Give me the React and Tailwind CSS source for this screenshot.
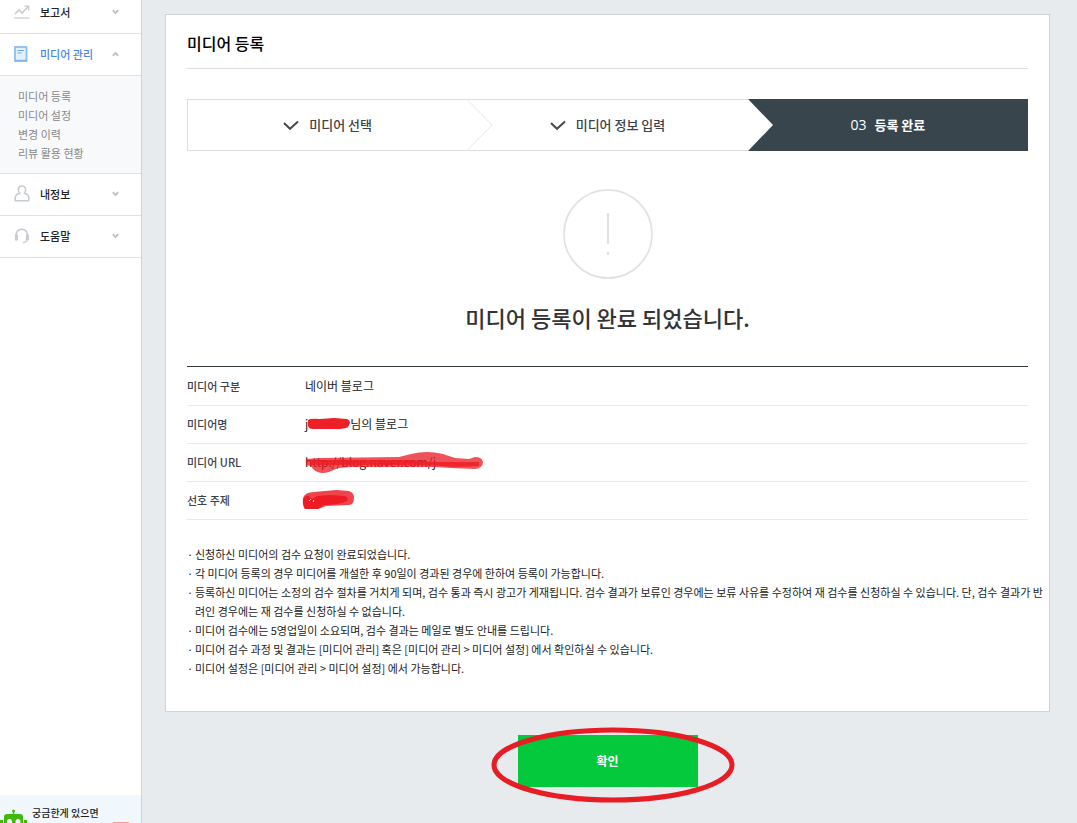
import { useState } from "react";

const ReportIcon = () => (
  <svg width="16" height="14" viewBox="0 0 16 14" fill="none" stroke="#c9cccf">
    <path d="M1 9l4-4 3 3 6-6" strokeWidth="1.6" />
    <path d="M10.5 1.2H14.700V5.500" strokeWidth="1.4" />
    <path d="M0 13h15.500" strokeWidth="1.2" />
  </svg>
);

const MediaIcon = () => (
  <svg width="14" height="16" viewBox="0 0 14 16" fill="none">
    <rect x="1" y="1" width="11.500" height="14" fill="#e3f0fd" stroke="#8dbff0" strokeWidth="1.8" />
    <path d="M3.500 4.500h6.500M3.500 7h4" stroke="#6aa9ea" strokeWidth="1.200" />
    <path d="M1 14.500h12" stroke="#7fb5ec" strokeWidth="1.500" />
  </svg>
);

const UserIcon = () => (
  <svg width="16" height="17" viewBox="0 0 16 17" fill="none" stroke="#c9cccf" strokeWidth="1.600">
    <path d="M5.700 8.300C3.200 5.200 4.200 1 8 1s4.800 4.200 2.300 7.300c3 .8 4.500 2.400 4.500 5V15.700H1.200V13.300c0-2.600 1.500-4.200 4.500-5z" strokeLinejoin="round" />
  </svg>
);

const HelpIcon = () => (
  <svg width="16" height="16" viewBox="0 0 16 16" fill="none" stroke="#c9cccf">
    <path d="M3 11.500C.500 6.500 3 1.200 7.800 1.200S15 6.500 12.700 11.500" strokeWidth="1.500" />
    <path d="M2.400 6.500v6M13.400 6.500v6" strokeWidth="3" />
    <path d="M13 12.500c-.7 1.500-2 2-4.200 2" strokeWidth="1.300" />
  </svg>
);

const Arrow = ({ up }) => (
  <svg width="7" height="6" viewBox="0 0 7 6" className={up ? "rotate-180" : ""}>
    <path d="M.8 1.200l2.700 2.900L6.200 1.200" fill="none" stroke="#bcc0c3" strokeWidth="1.800" />
  </svg>
);

const CheckIcon = () => (
  <svg width="16" height="11" viewBox="0 0 16 11" fill="none" stroke="#444a50" strokeWidth="2">
    <path d="M1 3l6 5.800L15 1.500" />
  </svg>
);

const menus = [
  { label: "보고서", icon: ReportIcon },
  {
    label: "미디어 관리",
    icon: MediaIcon,
    items: ["미디어 등록", "미디어 설정", "변경 이력", "리뷰 활용 현황"],
  },
  { label: "내정보", icon: UserIcon },
  { label: "도움말", icon: HelpIcon },
];

const notes = [
  "신청하신 미디어의 검수 요청이 완료되었습니다.",
  "각 미디어 등록의 경우 미디어를 개설한 후 90일이 경과된 경우에 한하여 등록이 가능합니다.",
  "등록하신 미디어는 소정의 검수 절차를 거치게 되며, 검수 통과 즉시 광고가 게재됩니다. 검수 결과가 보류인 경우에는 보류 사유를 수정하여 재 검수를 신청하실 수 있습니다. 단, 검수 결과가 반려인 경우에는 재 검수를 신청하실 수 없습니다.",
  "미디어 검수에는 5영업일이 소요되며, 검수 결과는 메일로 별도 안내를 드립니다.",
  "미디어 검수 과정 및 결과는 [미디어 관리] 혹은 [미디어 관리 > 미디어 설정] 에서 확인하실 수 있습니다.",
  "미디어 설정은 [미디어 관리 > 미디어 설정] 에서 가능합니다.",
];

const Sidebar = () => {
  const [open, setOpen] = useState("미디어 관리");

  return (
    <aside className="flex w-[142px] shrink-0 flex-col overflow-hidden border-r border-[#cdd3d7] bg-white">
      <nav className="-mt-2">
        {menus.map(({ label, icon: Icon, items }) => {
          const active = open === label;
          return (
            <div key={label}>
              <button
                type="button"
                onClick={() => setOpen(active ? "" : label)}
                className="flex h-[42px] w-full items-center border-b border-[#dfe3e6] pr-[22px] pb-0.5 pl-[14px] text-left"
              >
                <span className="flex w-[26px]">
                  <Icon />
                </span>
                <span
                  className={`flex-1 text-[11px] leading-4 font-medium ${active ? "text-[#4a86e8]" : "text-[#222]"}`}
                >
                  {label}
                </span>
                <Arrow up={active} />
              </button>
              {active && items && (
                <ul className="border-b border-[#dfe3e6] bg-[#f7f9fb] pt-[11px] pb-[10px] pl-[18px] text-[11px] leading-[19px] text-[#888]">
                  {items.map((item) => (
                    <li key={item}>
                      <a href="#">{item}</a>
                    </li>
                  ))}
                </ul>
              )}
            </div>
          );
        })}
      </nav>

      <div className="mt-auto flex h-7 items-start overflow-hidden bg-[#f0f7fd]">
        <svg width="32" height="28" viewBox="0 0 32 28" className="shrink-0">
          <path d="M13.500 15v5" stroke="#4cb820" strokeWidth="1.500" />
          <circle cx="13.500" cy="16" r="1.500" fill="#4cb820" />
          <path d="M4 28v-6q0-3 3-3h13q3 0 3 3v6z" fill="#3fba0c" />
          <path d="M0 25h3v3H0zM24 25h3v3h-3z" fill="#3fba0c" />
          <circle cx="9.500" cy="26.500" r="2.500" fill="#fff" />
          <circle cx="18" cy="26.500" r="2.500" fill="#fff" />
        </svg>
        <span className="shrink-0 pt-[10px] text-[10px] leading-4 font-medium text-[#222]">궁금한게 있으면</span>
        <span className="mt-[27px] ml-3 h-3 w-5 shrink-0 rounded-sm bg-[#f59a8f]" />
      </div>
    </aside>
  );
};

const Steps = () => (
  <ol className="mt-[30px] grid h-[52px] grid-cols-3 text-[13px] font-medium text-[#3c4248]">
    <li className="flex items-center justify-center gap-[10px] border-y border-l border-[#dcdfe1]">
      <CheckIcon />
      미디어 선택
    </li>
    <li className="relative flex items-center justify-center gap-[10px] border-y border-[#dcdfe1]">
      <svg width="26" height="52" viewBox="0 0 26 52" className="absolute -top-px left-0">
        <path d="M0 .5L25 26 0 51.500" fill="#fff" stroke="#e6e8ea" />
      </svg>
      <CheckIcon />
      미디어 정보 입력
    </li>
    <li className="relative flex items-center justify-center gap-2 bg-[#39454d] text-white">
      <svg width="26" height="52" viewBox="0 0 26 52" className="absolute top-0 left-0">
        <path d="M0 0L25 26 0 52z" fill="#fff" />
      </svg>
      <span className="font-['Open_Sans',sans-serif] text-sm font-normal">03</span>
      <span className="font-bold">등록 완료</span>
    </li>
  </ol>
);

const Row = ({ label, children }) => (
  <tr className="h-[38px] border-b border-[#e8eaec]">
    <th scope="row" className="w-[118px] text-left text-[11px] font-medium text-[#3c4248]">
      {label}
    </th>
    <td className="text-xs text-[#222]">{children}</td>
  </tr>
);

const MediaTable = () => (
  <div className="mt-[33px] border-t border-[#33383d]">
    <table className="w-full border-collapse">
      <tbody>
        <Row label="미디어 구분">네이버 블로그</Row>
        <Row label="미디어명">
          <span className="flex items-center">
            j
            <svg width="42" height="14" viewBox="0 0 42 14" className="shrink-0">
              <path d="M0 3q3-2 12-1l14-1 13 1q3 1 3 4l-2 4q-3 2-12 2H5Q0 12 0 8z" fill="#ed2027" />
            </svg>
            님의 블로그
          </span>
        </Row>
        <Row label="미디어 URL">
          <span className="relative inline-block">
            http://blog.naver.com/j
            <svg width="178" height="24" viewBox="0 0 178 24" className="absolute -top-[3px] left-0">
              <path
                d="M1 8l13-1 80-1 12-3q16-4 32 0l12 4 14 1 6-2q7 0 8 5 0 6-8 7l-24-1-16-1H46l-13 1-9 4q-10 3-16-3l-2-3-5-1z"
                fill="#ea1820"
                fillOpacity=".75"
              />
              <path d="M4 9h102l20 2h48v4l-24 1-30-2H6z" fill="#ed1c24" fillOpacity=".8" />
            </svg>
          </span>
        </Row>
        <Row label="선호 주제">
          <svg width="54" height="22" viewBox="0 0 54 22" className="-ml-[3px] block">
            <path d="M1 9q2-6 11-6l22-2 13 1q5 2 5 6 0 8-5 8l-23 1-8 3H3q-3-4-2-11z" fill="#ee444b" />
            <path d="M1 11q2-5 6-4l3 3 5-3 14-1 14 1q4 2 2 5-9 4-23 4l-6 4H3q-2-3-2-9z" fill="#ed1c24" />
            <path d="M7 12l2-2M12 11l-1 2" stroke="#fbd5d7" />
          </svg>
        </Row>
      </tbody>
    </table>
  </div>
);

const App = () => {
  return (
    <div className="flex min-h-screen bg-[#e7ebee] font-['Noto_Sans_CJK_KR',sans-serif]">
      <Sidebar />
      <main className="flex min-w-0 flex-1 flex-col pt-[14px] pr-[27px] pb-6 pl-[23px]">
        <section className="border border-[#ced3d7] bg-white px-[21px] pb-[33px]">
          <h1 className="flex h-[54px] items-center border-b border-[#dcdfe1] pt-0.5 text-base font-medium text-black">
            미디어 등록
          </h1>
          <Steps />

          <div className="mt-[38px] flex flex-col items-center">
            <svg width="90" height="90" viewBox="0 0 90 90" fill="none" stroke="#dfe1e5">
              <circle cx="45" cy="45" r="44" strokeWidth="1.600" />
              <path d="M45 24v31M45 63v3" strokeWidth="2" />
            </svg>
            <h2 className="mt-[22px] text-[22px] leading-8 font-medium text-[#333]">
              미디어 등록이 완료 되었습니다.
            </h2>
          </div>

          <MediaTable />

          <ul className="mt-[25px] -mr-4 text-[11px] leading-[19px] text-[#222]">
            {notes.map((note) => (
              <li key={note} className="flex">
                <span className="w-2 shrink-0">·</span>
                <span>{note}</span>
              </li>
            ))}
          </ul>
        </section>

        <div className="relative mt-[23px] self-center">
          <button type="button" className="block h-[52px] w-[180px] bg-[#04c93c] text-xs font-bold text-white">
            확인
          </button>
          <svg
            width="246"
            height="76"
            viewBox="0 0 246 76"
            className="pointer-events-none absolute -top-2 -left-7"
          >
            <ellipse cx="123" cy="38" rx="119" ry="35" fill="none" stroke="#e81c24" strokeWidth="5" />
          </svg>
        </div>
      </main>
    </div>
  );
};

export default App;
